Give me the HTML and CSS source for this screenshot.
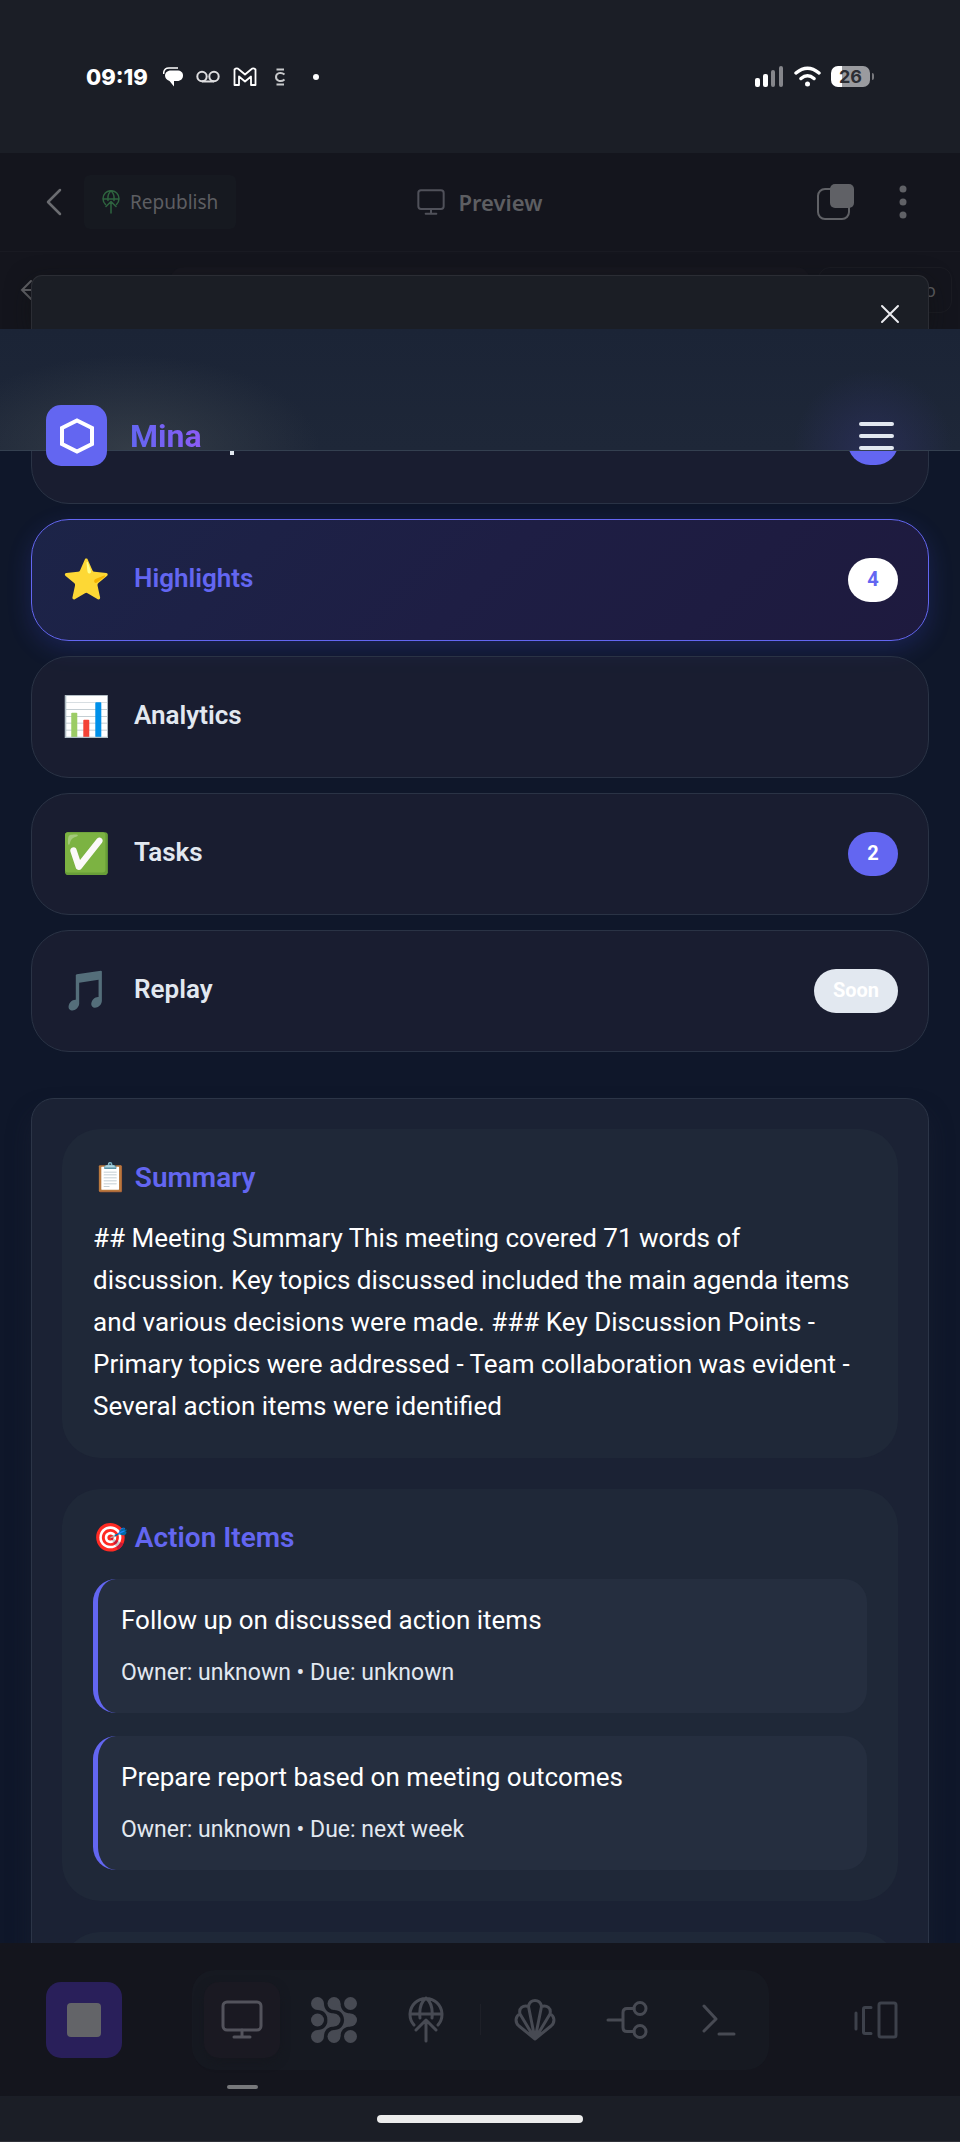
FILE: index.html
```html
<!DOCTYPE html>
<html lang="en">
<head>
<meta charset="utf-8">
<meta name="viewport" content="width=device-width, initial-scale=1">
<title>Mina</title>
<link rel="stylesheet" href="styles.css">
</head>
<body>
<div class="status">
  <div class="status-left">
    <span class="clock">09:19</span>
    <svg width="20" height="20" viewBox="0 0 20 20"><path d="M8 3.500H14C18 3.500 20 5.500 20 8.500S18 14 14 14H11V19.500L6.500 14C3.500 13 2 11 2 8.500S4 3.500 8 3.500Z" fill="#fff"/><path d="M.6 7C.6 3 3 1 6 1H15" fill="none" stroke="#fff" stroke-width="1.500"/></svg>
    <svg width="24" height="14" viewBox="0 0 24 14" fill="none" stroke="#dedee0" stroke-width="2"><circle cx="6" cy="6.500" r="4.700"/><circle cx="18" cy="6.500" r="4.700"/><path d="M6 11.500H18"/></svg>
    <svg width="24" height="20" viewBox="0 0 24 20" fill="none" stroke="#fff" stroke-width="1.800" stroke-linejoin="round"><path d="M1.500 2.500V18H6V9.500L12 14.500L18 9.500V18H22.500V2.500C21 1 19.500 1 18 2.500L12 7.500L6 2.500C4.500 1 3 1 1.500 2.500Z"/></svg>
    <svg class="coin" width="12" height="18" viewBox="0 0 12 18" fill="none" stroke="#c8c9cb" stroke-width="2"><path d="M2.500 1.500H10M2.500 16.500H10M10.500 6.500C7 3.500 2 5 2 9S7 14.500 10.500 11.500"/></svg>
    <span class="dot"></span>
  </div>
  <div class="status-right">
    <svg width="29" height="21" viewBox="0 0 29 21"><rect x="0" y="12" width="5" height="9" rx="2" fill="#fff"/><rect x="8" y="8" width="5" height="13" rx="2" fill="#fff"/><rect x="16" y="4" width="4" height="17" rx="2" fill="#85868b"/><rect x="24" y="0" width="4" height="21" rx="2" fill="#85868b"/></svg>
    <svg width="27" height="21" viewBox="0 0 27 21" fill="none" stroke="#fff" stroke-linecap="round" stroke-width="3.500"><path d="M2 7Q13.500-2.500 25 7M7 12.500Q13.500 7 20 12.500"/><circle cx="13.500" cy="18" r="2.500" fill="#fff" stroke="none"/></svg>
    <span class="battery">26</span>
  </div>
</div>

<header class="toolbar">
  <div class="tool-left">
    <button class="plain" aria-label="Back"><svg width="16" height="28" viewBox="0 0 16 28" fill="none" stroke="#6b6c71" stroke-width="2.500" stroke-linecap="round" stroke-linejoin="round"><path d="M14 2L2 14L14 26"/></svg></button>
    <button class="republish"><svg width="18" height="24" viewBox="0 0 36 48" fill="none" stroke="#2e643f" stroke-width="3" stroke-linecap="round" stroke-linejoin="round"><path d="M7 29A16 16 0 1 1 29 29M2 18H34M12 21C11 12 14 5 18 2C22 5 25 12 24 21M18 46V24M8 33L18 23L28 33"/></svg>Republish</button>
  </div>
  <h1 class="preview"><svg width="28" height="26" viewBox="0 0 42 39" fill="none" stroke="#50515a" stroke-width="3" stroke-linecap="round"><rect x="2" y="2" width="38" height="28" rx="4"/><path d="M21 30V37M13 37H29"/></svg>Preview</h1>
  <div class="tool-right">
    <button class="plain" aria-label="Tabs"><svg width="38" height="38" viewBox="0 0 38 38"><rect x="2" y="6" width="31" height="30" rx="7" fill="none" stroke="#606166" stroke-width="2"/><rect x="14" y="1" width="24" height="24" rx="5" fill="#606166"/></svg></button>
    <button class="plain" aria-label="More"><svg width="8" height="36" viewBox="0 0 8 36" fill="#606166"><circle cx="4" cy="5" r="3.500"/><circle cx="4" cy="18" r="3.500"/><circle cx="4" cy="31" r="3.500"/></svg></button>
  </div>
</header>

<div class="address">
  <svg class="arrow" width="22" height="22" viewBox="0 0 22 22" fill="none" stroke="#606166" stroke-width="2" stroke-linecap="round"><path d="M11 2L2 11L11 20M2 11H20"/></svg>
  <div class="field"></div>
  <div class="open-pill">o</div>
  <div class="sheet">
    <button class="plain" aria-label="Close"><svg width="20" height="20" viewBox="0 0 20 20" stroke="#ececf0" stroke-width="2" stroke-linecap="round"><path d="M2 2L18 18M18 2L2 18"/></svg></button>
  </div>
</div>

<main class="app">
  <div class="app-header">
    <div class="brand">
      <span class="logo"><svg width="36" height="36" viewBox="0 0 36 36" fill="none" stroke="#fff" stroke-width="4"><path d="M18 2.500L33 10V26L18 33.500L3 26V10Z"/></svg></span>
      <span class="brand-name">Mina</span>
    </div>
    <button class="plain menu" aria-label="Menu"><span></span><span></span><span></span></button>
  </div>

  <div class="content">
    <nav class="tabs">
      <button class="tab covered" aria-label="Transcript"><span class="stem"></span><span class="badge"></span></button>
      <button class="tab active"><span class="tab-icon">⭐</span><span class="tab-label">Highlights</span><span class="badge">4</span></button>
      <button class="tab"><span class="tab-icon">📊</span><span class="tab-label">Analytics</span></button>
      <button class="tab"><span class="tab-icon">✅</span><span class="tab-label">Tasks</span><span class="badge">2</span></button>
      <button class="tab"><span class="tab-icon">🎵</span><span class="tab-label">Replay</span><span class="badge soon">Soon</span></button>
    </nav>

    <div class="panel">
      <section class="block">
        <h2>📋 Summary</h2>
        <p>## Meeting Summary This meeting covered 71 words of discussion. Key topics discussed included the main agenda items and various decisions were made. ### Key Discussion Points - Primary topics were addressed - Team collaboration was evident - Several action items were identified</p>
      </section>
      <section class="block">
        <h2>🎯 Action Items</h2>
        <div class="items">
          <article class="item"><p>Follow up on discussed action items</p><small>Owner: unknown • Due: unknown</small></article>
          <article class="item"><p>Prepare report based on meeting outcomes</p><small>Owner: unknown • Due: next week</small></article>
        </div>
      </section>
      <section class="block next"></section>
    </div>
  </div>
</main>

<footer class="dock">
  <button class="stop" aria-label="Stop"><span></span></button>
  <div class="dock-group">
    <button class="dock-btn current" aria-label="Preview"><svg width="42" height="39" viewBox="0 0 42 39" fill="none" stroke="#53535c" stroke-width="3" stroke-linecap="round"><rect x="2" y="2" width="38" height="28" rx="4"/><path d="M21 30V37M13 37H29"/></svg></button>
    <button class="dock-btn" aria-label="Agent"><svg width="46" height="46" viewBox="0 0 46 46" fill="#474a53"><circle cx="6.500" cy="6.500" r="6.500"/><circle cx="23" cy="6.500" r="6.500"/><circle cx="39.500" cy="6.500" r="6.500"/><circle cx="6.500" cy="23" r="6.500"/><circle cx="23" cy="23" r="6.500"/><circle cx="39.500" cy="23" r="6.500"/><circle cx="6.500" cy="39.500" r="6.500"/><circle cx="23" cy="39.500" r="6.500"/><circle cx="39.500" cy="39.500" r="6.500"/><path d="M13 6.500C13 12.500 17 16.500 23 16.500L16.500 23C16.500 17 12.500 13 6.500 13ZM29.500 6.500C29.500 12.500 33.500 16.500 39.500 16.500L33 23C33 17 29 13 23 13ZM13 39.500C13 33.500 17 29.500 23 29.500L16.500 23C16.500 29 12.500 33 6.500 33ZM29.500 39.500C29.500 33.500 33.500 29.500 39.500 29.500L33 23C33 29 29 33 23 33Z"/></svg></button>
    <button class="dock-btn" aria-label="Publish"><svg width="36" height="48" viewBox="0 0 36 48" fill="none" stroke="#474a53" stroke-width="3" stroke-linecap="round" stroke-linejoin="round"><path d="M6 29A16 16 0 1 1 30 29M2 18H34M12 22C11 13 13 6 18 2C23 6 25 13 24 22M18 45V24M8 34L18 24L28 34"/></svg></button>
    <span class="divider"></span>
    <button class="dock-btn" aria-label="Shell"><svg width="42" height="42" viewBox="0 0 42 42" fill="none" stroke="#474a53" stroke-width="3" stroke-linecap="round" stroke-linejoin="round"><path d="M21 40L5 27C.5 23 1.500 17 6 15C4.500 9 9 6 14.500 7.500C15 3.500 18 1.500 21 1.500S27 3.500 27.500 7.500C33 6 37.500 9 36 15C40.500 17 41.500 23 37 27ZM21 40L14.500 7.500M21 40L27.500 7.500M21 40L6 15M21 40L36 15"/></svg></button>
    <button class="dock-btn" aria-label="Workflows"><svg width="42" height="38" viewBox="0 0 42 38" fill="none" stroke="#474a53" stroke-width="3" stroke-linecap="round"><circle cx="34" cy="7.500" r="6"/><circle cx="34" cy="30.500" r="6"/><path d="M2 19H17M28 7.500H21Q17 7.500 17 11.500V26.500Q17 30.500 21 30.500H28"/></svg></button>
    <button class="dock-btn" aria-label="Console"><svg width="34" height="32" viewBox="0 0 34 32" fill="none" stroke="#474a53" stroke-width="3" stroke-linecap="round" stroke-linejoin="round"><path d="M2 2L14 15L2 27M17 30H32"/></svg></button>
  </div>
  <button class="dock-btn" aria-label="Switch pane"><svg width="44" height="38" viewBox="0 0 44 38" fill="none" stroke="#3d414b" stroke-width="3" stroke-linecap="round" stroke-linejoin="round"><rect x="25" y="2" width="17" height="34" rx="2"/><path d="M17 6.500H11Q9.500 6.500 9.500 8V31Q9.500 32.500 11 32.500H17M2 12V28"/></svg></button>
</footer>
<div class="home"><span></span></div>
</body>
</html>
```
FILE: styles.css
```css
* { box-sizing: border-box; }

body {
  margin: 0;
  height: 100vh;
  display: flex;
  flex-direction: column;
  overflow: hidden;
  background: #14151d;
  color: #fff;
  font-family: Roboto, "Liberation Sans", "Noto Color Emoji", sans-serif;
}

button { font: inherit; color: inherit; border: 0; padding: 0; background: none; }
svg { display: block; flex: none; }
h1, h2, p { margin: 0; }
.plain { display: flex; }

/* Device status bar */
.status {
  flex: none;
  height: 153px;
  padding: 0 86px;
  display: flex;
  align-items: center;
  justify-content: space-between;
  background: #1b1e26;
}
.status-left { display: flex; align-items: center; gap: 13px; }
.clock { font: 800 22px/30px Inter, sans-serif; margin-right: 2px; }
.coin { margin-left: 4px; }
.dot { width: 6px; height: 6px; border-radius: 50%; background: #fff; margin-left: 14px; }
.status-right { display: flex; align-items: center; gap: 10px; }
.battery {
  position: relative;
  width: 39px;
  margin-right: 4px;
  border-radius: 7px;
  background: linear-gradient(90deg, #fff 11px, #9a9b9f 11px);
  color: #2c2e33;
  font: 700 18px/21px Inter, sans-serif;
  text-align: center;
}
.battery::after {
  content: "";
  position: absolute;
  right: -4px;
  top: 7px;
  width: 2px;
  height: 7px;
  border-radius: 0 2px 2px 0;
  background: #77787d;
}

/* Workspace toolbar */
.toolbar {
  flex: none;
  height: 99px;
  padding: 0 46px;
  display: grid;
  grid-template-columns: 1fr auto 1fr;
  align-items: center;
  border-bottom: 1px solid #191a22;
  color: #5d5e62;
  font-family: "Noto Sans", sans-serif;
}
.tool-left, .tool-right { display: flex; align-items: center; gap: 22px; }
.tool-right { justify-content: flex-end; gap: 45px; padding-right: 7px; }
.republish {
  display: flex;
  align-items: center;
  gap: 10px;
  height: 54px;
  padding: 0 18px;
  border-radius: 6px;
  background: #161920;
  font-size: 19px;
}
.preview { display: flex; align-items: center; gap: 13px; font-size: 22px; font-weight: 600; line-height: 28px; }

/* Address row with the sheet rising over it */
.address {
  position: relative;
  flex: none;
  height: 77px;
  padding: 15px 8px 0 20px;
  display: flex;
  align-items: flex-start;
  gap: 8px;
}
.arrow { margin-top: 12px; }
.field { flex: 1; height: 46px; margin: 0 0 0 120px; border-radius: 14px; background: #17171f; }
.open-pill {
  width: 134px;
  padding-right: 15px;
  border: 1px solid #1b1c23;
  border-radius: 12px;
  color: #5d5e62;
  font: 18px/44px "Noto Sans", sans-serif;
  text-align: right;
}
.sheet {
  position: absolute;
  inset: 23px 31px 0;
  padding: 28px 28px 0;
  display: flex;
  justify-content: flex-end;
  align-items: flex-start;
  border: 1px solid #2b2d34;
  border-bottom: 0;
  border-radius: 11px 11px 0 0;
  background: #1b1e25;
  box-shadow: 0 8px 24px rgba(15, 18, 18, .5);
}

/* App */
.app { position: relative; flex: 1; min-height: 0; overflow: hidden; background: #0f172a; }
.app-header {
  position: absolute;
  inset: 0 0 auto;
  z-index: 1;
  height: 122px;
  padding: 76px 66px 0 46px;
  display: flex;
  justify-content: space-between;
  align-items: flex-start;
  border-bottom: 1px solid #344050;
  background:
    radial-gradient(ellipse 190px 95px at 130px 100%, rgba(72, 80, 85, .5), transparent),
    radial-gradient(circle 80px at calc(100% - 87px) 100%, rgba(50, 52, 110, .5), transparent),
    linear-gradient(#1b2436, #1e2738);
}
.brand { display: flex; align-items: center; gap: 23px; }
.logo {
  width: 61px;
  height: 61px;
  display: grid;
  place-items: center;
  border-radius: 15px;
  background: #6366f1;
}
.brand-name {
  font-size: 32px;
  font-weight: 700;
  line-height: 40px;
  color: transparent;
  background: linear-gradient(90deg, #6366f1, #8b5cf6);
  background-clip: text;
}
.menu { flex-direction: column; gap: 8px; padding-top: 17px; }
.menu span { width: 35px; height: 4px; border-radius: 2px; background: #e2e8f0; }

.content { padding: 53px 31px 0; display: flex; flex-direction: column; gap: 46px; }
.tabs { display: flex; flex-direction: column; gap: 15px; }
.tab {
  height: 122px;
  padding: 0 30px;
  display: flex;
  align-items: center;
  gap: 24px;
  border: 1px solid #2a3345;
  border-radius: 38px;
  background: rgba(40, 40, 58, .4);
  color: #e2e8f0;
  font-size: 26px;
  font-weight: 600;
  text-align: left;
}
.tab-icon { width: 48px; font-size: 39px; line-height: 46px; font-weight: 400; text-align: center; }
.tab-label { flex: 1; line-height: 34px; padding-bottom: 4px; }
.tab.active {
  border-color: #6366f1;
  color: #6366f1;
  background: linear-gradient(135deg, #1c2448, #1e1e44 50%, #1e1a3e);
  box-shadow: 0 8px 24px rgba(70, 80, 241, .2);
}
/* Only the foot of this tab's label shows below the header */
.covered { justify-content: space-between; }
.stem { width: 4px; height: 16px; margin: 8px 0 0 168px; background: #e2e8f0; }
.badge {
  min-width: 50px;
  height: 44px;
  padding: 0 19px;
  border-radius: 22px;
  background: #6366f1;
  color: #fff;
  font-size: 20px;
  font-weight: 700;
  line-height: 42px;
  text-align: center;
}
.active .badge { background: #fff; color: #6366f1; }
.soon { background: #e2e8f0; }

.panel {
  padding: 30px;
  display: flex;
  flex-direction: column;
  gap: 31px;
  border: 1px solid #2c3547;
  border-radius: 23px;
  background: #1b2234;
  box-shadow: 0 15px 22px rgba(27, 34, 52, .5);
}
.block { padding: 31px; border-radius: 38px; background: #1f2838; }
.block h2 { margin-bottom: 22px; color: #6366f1; font-size: 28px; font-weight: 600; line-height: 35px; }
.block p { font-size: 26px; line-height: 42px; }
.next { height: 300px; }
.items { display: flex; flex-direction: column; gap: 23px; padding-top: 2px; }
.item {
  padding: 20px 23px 22px;
  border-left: 5px solid #6366f1;
  border-radius: 23px;
  background: #252e3f;
}
.item small { display: block; margin-top: 14px; color: #e2e8f0; font-size: 23px; line-height: 36px; }

/* Workspace dock */
.dock {
  flex: none;
  height: 153px;
  padding: 0 46px;
  display: flex;
  align-items: center;
  justify-content: space-between;
}
.stop {
  width: 76px;
  height: 76px;
  display: grid;
  place-items: center;
  border-radius: 15px;
  background: #291f5a;
}
.stop span { width: 34px; height: 34px; border-radius: 4px; background: #636468; }
.dock-group { display: flex; align-items: center; gap: 16px; padding: 12px; border-radius: 23px; background: #161921; }
.dock-btn { position: relative; width: 76px; height: 76px; display: grid; place-items: center; border-radius: 15px; }
.current { background: #1a1922; box-shadow: 0 4px 10px #15171e; }
.current::after {
  content: "";
  position: absolute;
  left: 23px;
  bottom: -31px;
  width: 31px;
  height: 4px;
  border-radius: 2px;
  background: #77787b;
}
.divider { width: 1px; height: 31px; background: #1e2028; }
.home {
  flex: none;
  height: 46px;
  display: grid;
  place-items: center;
  border-bottom: 1px solid #303239;
  background: #1b1e26;
}
.home span { width: 206px; height: 8px; border-radius: 4px; background: #ececec; }
```
